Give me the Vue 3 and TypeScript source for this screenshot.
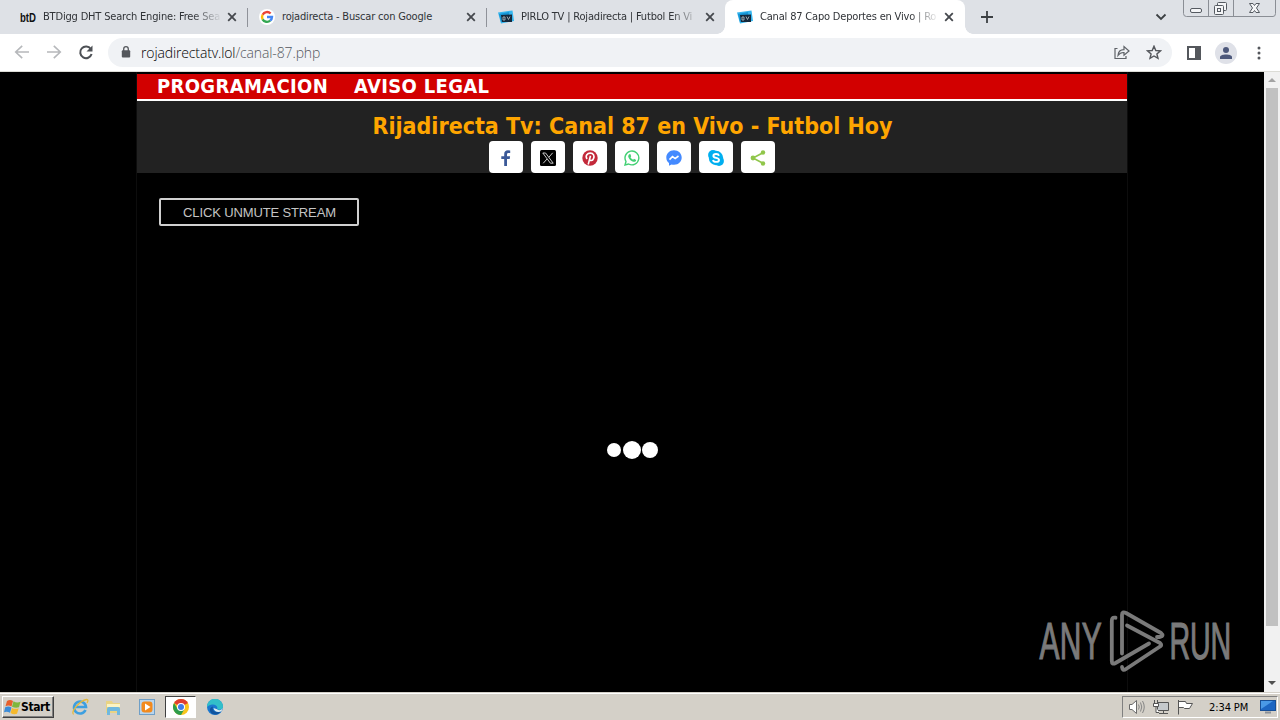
<script setup lang="ts">
interface Tab {
  title: string
  icon: 'bt' | 'google' | 'tv'
  cls: string
  active?: boolean
}

const tabs: Tab[] = [
  { title: 'BTDigg DHT Search Engine: Free Sea', icon: 'bt', cls: 't1' },
  { title: 'rojadirecta - Buscar con Google', icon: 'google', cls: 't2' },
  { title: 'PIRLO TV | Rojadirecta | Futbol En Vi', icon: 'tv', cls: 't3' },
  { title: 'Canal 87 Capo Deportes en Vivo | Ro', icon: 'tv', cls: 't4', active: true },
]

const shares = ['facebook', 'x', 'pinterest', 'whatsapp', 'messenger', 'skype', 'share']
</script>

<template>
  <div class="screen">
    <header class="tabstrip">
      <div v-for="tab in tabs" :key="tab.cls" class="tab" :class="[tab.cls, { active: tab.active }]">
        <span class="favicon">
          <svg v-if="tab.icon === 'bt'" width="16" height="16" viewBox="0 0 16 16">
            <text class="bt" x="0" y="12.500" textLength="16" lengthAdjust="spacingAndGlyphs">btD</text>
          </svg>
          <svg v-else-if="tab.icon === 'google'" width="16" height="16" viewBox="0 0 16 16">
            <circle cx="8" cy="8" r="8" fill="#fff" />
            <g fill="none" stroke-width="2.4">
              <path d="M11.6 4.5A5 5 0 0 0 3.6 5.7" stroke="#ea4335" />
              <path d="M3.6 5.7A5 5 0 0 0 3.6 10.4" stroke="#fbbc05" />
              <path d="M3.6 10.3A5 5 0 0 0 11.2 11.7" stroke="#34a853" />
              <path d="M8 8H13A5 5 0 0 1 11.2 11.7" stroke="#4285f4" />
            </g>
          </svg>
          <svg v-else width="16" height="16" viewBox="0 0 16 16">
            <path d="M0 3.5 14.5 1.5 16 12 3 14.5Z" fill="#35b5ee" />
            <path d="M1 5 11 3l1 8-9 2z" fill="#1695d5" />
            <path d="M3 6 14 5.5V13H4Z" fill="#14283c" />
            <path d="M5 8h2v3H5zM9 7.5l1.5 3 1.5-3" fill="none" stroke="#aab4b8" stroke-width=".9" />
          </svg>
        </span>
        <span class="title">{{ tab.title }}</span>
        <svg class="close" width="10" height="10" viewBox="0 0 10 10">
          <path d="M1.2 1.2 8.8 8.8M8.8 1.2 1.2 8.8" stroke="#45484d" stroke-width="1.8" />
        </svg>
      </div>
      <svg class="plus" width="12" height="12" viewBox="0 0 12 12">
        <path d="M6 0V12M0 6H12" stroke="#3c4043" stroke-width="1.8" />
      </svg>
      <svg class="chevron" width="12" height="8" viewBox="0 0 12 8">
        <path d="M1.5 1.5 6 6 10.500 1.5" fill="none" stroke="#3c4043" stroke-width="1.8" />
      </svg>
      <svg class="winbtns" width="94" height="18" viewBox="0 0 94 18">
        <path d="M.5 0V13.500Q.5 16.500 3.500 16.500H90Q92.500 16.500 92.500 13.500V0M25.500 0V16.500M50.500 0V16.500" fill="none" stroke="#8a8e95" />
        <g fill="#f4f5f7" stroke="#555a61" stroke-width="1">
          <rect x="7.500" y="8.500" width="11" height="4" rx="1.5" />
          <rect x="34.500" y="2.500" width="9" height="8" rx="1" />
          <rect x="31.500" y="5.500" width="9" height="9" rx="1" />
          <rect x="34.500" y="8.500" width="3" height="3" />
          <path d="M66.500 3.500H70L71.500 5.500 73 3.500H76.500L73.500 8 76.500 12.500H73L71.500 10.500 70 12.500H66.500L69.500 8Z" />
        </g>
      </svg>
    </header>

    <div class="toolbar">
      <svg class="nav" width="96" height="16" viewBox="0 0 96 16">
        <g fill="none" stroke="#b6b8bb" stroke-width="1.6">
          <path d="M16 7H3M9.200 .8 2.700 7 9.200 13.200" />
          <path d="M34 7H47M40.800 .8 47.300 7 40.800 13.200" />
        </g>
        <path d="M77.800 4A5.800 5.800 0 1 0 78.600 9" fill="none" stroke="#4d5055" stroke-width="2" />
        <path d="M79.500 .5V6.500H73.500Z" fill="#4d5055" />
      </svg>
      <div class="omnibox">
        <svg class="lock" width="10" height="13" viewBox="0 0 10 13">
          <rect x=".8" y="4.200" width="8.400" height="7.300" rx="1" fill="#54575c" />
          <path d="M2.700 5V3a2.300 2.300 0 0 1 4.600 0V5" fill="none" stroke="#54575c" stroke-width="1.300" />
        </svg>
        <span class="url"><b>rojadirectatv.lol</b>/canal-87.php</span>
        <svg class="share-page" width="16" height="15" viewBox="0 0 16 15" fill="none" stroke="#5f6368" stroke-width="1.200">
          <path d="M3.500 3.500H1V13.500H12V11" />
          <path d="M4 10.500C4.300 6.800 6.500 4.700 10 4.700V1.500L15 6 10 10.200V7.500C7.500 7.300 5.500 8.400 4 10.500Z" />
        </svg>
        <svg class="star" width="16" height="16" viewBox="0 0 16 16">
          <path d="M8 1.200 9.800 5.500 14.400 5.900 10.900 8.900 12 13.400 8 11 4 13.400 5.100 8.900 1.600 5.900 6.200 5.500Z" fill="none" stroke="#54575c" stroke-width="1.400" />
        </svg>
      </div>
      <svg class="panel" width="14" height="14" viewBox="0 0 14 14">
        <rect x="1" y="1" width="12" height="12" fill="none" stroke="#54575c" stroke-width="2" />
        <rect x="8" y="1" width="5" height="12" fill="#54575c" />
      </svg>
      <svg class="avatar" width="22" height="22" viewBox="0 0 22 22">
        <circle cx="11" cy="11" r="11" fill="#dfe1e8" />
        <circle cx="11" cy="8" r="3" fill="#4d587b" />
        <path d="M5 17V15C5 11.500 17 11.500 17 15V17Z" fill="#4d587b" />
      </svg>
      <svg class="dots" width="4" height="14" viewBox="0 0 4 14" fill="#54575c">
        <circle cx="2" cy="2" r="1.500" /><circle cx="2" cy="7" r="1.500" /><circle cx="2" cy="12" r="1.500" />
      </svg>
    </div>

    <main class="viewport">
      <div class="page">
        <nav class="menu"><a class="m1">PROGRAMACION</a><a class="m2">AVISO LEGAL</a></nav>
        <section class="banner">
          <h1><span>Rijadirecta Tv: Canal 87 en Vivo - Futbol Hoy</span></h1>
          <div class="shares">
            <span v-for="s in shares" :key="s" class="share">
              <svg width="16" height="16" viewBox="0 0 16 16">
                <path v-if="s === 'facebook'" d="M6.200 16V9H3.300V6.300H6.200V4.200C6.200 1.400 7.700.3 10 .3L12.200.5V2.900H10.700C9.300 2.900 9 3.600 9 4.600V6.300H12.100L11.700 9H9V16Z" fill="#3b5998" />
                <g v-else-if="s === 'x'">
                  <rect width="16" height="16" rx="1.500" fill="#000" />
                  <path d="M2.800 3H5.600L13.200 13.200H10.400ZM12.700 2.800 8.900 7.200M7 9 3.200 13.300" fill="none" stroke="#ddd" stroke-width=".9" />
                </g>
                <g v-else-if="s === 'pinterest'">
                  <circle cx="8" cy="8" r="7.700" fill="#c3293a" />
                  <path d="M5 9C2.800 5.300 5.600 3.100 8.300 3.100 11.500 3.100 12.700 5.900 11.500 8.600 10.500 11 8.200 10.800 7.500 9.600M8.500 5.700 6.200 14.500" fill="none" stroke="#fff" stroke-width="1.600" />
                </g>
                <g v-else-if="s === 'whatsapp'">
                  <path d="M1 15 2 11.500A6.900 6.900 0 1 1 4.600 14Z" fill="none" stroke="#43d074" stroke-width="1.400" />
                  <path d="M5.300 4.200 6.300 4 7.200 6.200 6.500 7.200C7.100 8.400 7.900 9.200 9.200 9.700L10 8.800 12.200 9.900C12 11.600 10.600 12.200 9.200 11.700 6.900 11 5 9.200 4.300 7 4 5.900 4.500 4.800 5.300 4.200Z" fill="#43d074" />
                </g>
                <g v-else-if="s === 'messenger'">
                  <path d="M8 .2C3.500.2.300 3.500.300 7.500.300 9.900 1.300 11.800 3 13.100V15.800L5.500 14.400C11.500 15.900 15.700 12.200 15.700 7.500 15.700 3.300 12.500.2 8 .2Z" fill="#448aff" />
                  <path d="M3.500 9.600 6.500 6.500 9.200 8.600 12.500 6" fill="none" stroke="#fff" stroke-width="1.600" />
                </g>
                <g v-else-if="s === 'skype'">
                  <circle cx="5" cy="5" r="4.900" fill="#00aff0" /><circle cx="11" cy="11" r="4.900" fill="#00aff0" /><circle cx="8" cy="8" r="7.200" fill="#00aff0" />
                  <path d="M11 5.700C10.300 3.400 5.400 3.500 5.400 5.900 5.400 8.500 11 7.300 11 10 11 12.500 5.600 12.600 5 10" fill="none" stroke="#fff" stroke-width="1.900" />
                </g>
                <g v-else fill="#90c64a">
                  <path d="M13 2.800 3 8 13 13.200" fill="none" stroke="#90c64a" stroke-width="1.600" />
                  <circle cx="13" cy="2.500" r="2.200" /><circle cx="3" cy="8" r="2.400" /><circle cx="13" cy="13.500" r="2.200" />
                </g>
              </svg>
            </span>
          </div>
        </section>
        <section class="player">
          <button class="unmute"><span>CLICK UNMUTE STREAM</span></button>
          <div class="loader"><i class="d1" /><i class="d2" /><i class="d3" /></div>
        </section>
      </div>
      <div class="scrollbar">
        <svg width="8" height="4" viewBox="0 0 8 4"><path d="M0 4 4 0 8 4Z" fill="#a3a3a3" /></svg>
        <div class="thumb" />
        <svg class="down" width="8" height="4" viewBox="0 0 8 4"><path d="M0 0 4 4 8 0Z" fill="#505050" /></svg>
      </div>
      <svg class="watermark" width="200" height="64" viewBox="0 0 200 64">
        <g fill="#7a7a7a" stroke="#7a7a7a" stroke-width="1.200" font-family="'Liberation Sans', Arial, sans-serif" font-size="52">
          <text x="0" y="0" transform="translate(3.500 50) scale(.575 1)" textLength="108">ANY</text>
          <text x="0" y="0" transform="translate(133.500 50) scale(.55 1)" textLength="112">RUN</text>
        </g>
        <g fill="none" stroke="#7a7a7a" stroke-width="3.800" stroke-linejoin="round" stroke-linecap="round">
          <path d="M79.500 8.700C76.500 8 75.800 10 75.800 12V52Q75.800 56 79.500 54L113 34.500" />
          <path d="M86 44.500V6Q86 2 90 4L125 24Q128.500 27 124 28L121 28" />
          <path d="M91 16.500 124 34Q126.500 36 124 37.500L90 60Q86.500 62.500 86 58" />
        </g>
      </svg>
    </main>

    <footer class="taskbar">
      <div class="start">
        <svg width="17" height="16" viewBox="0 0 17 16">
          <path d="M3 2Q6 0 9 2L7.500 7.500Q4.500 5.500 1.500 7.300Z" fill="#e8602c" />
          <path d="M9.500 2.300Q13 4.500 16.500 2.800L15 8.300Q11.500 9.500 8 7.700Z" fill="#7fb73c" />
          <path d="M1.200 8.300Q4.500 6.500 7.500 8.500L6 13.800Q3 12 0 13.200Z" fill="#3c8cd8" />
          <path d="M8 8.900Q11.200 10.500 14.700 9.200L13 14.800Q9.700 16 6.500 14Z" fill="#f5b92d" />
        </svg>
        <b>Start</b>
      </div>
      <svg class="ie" width="18" height="18" viewBox="0 0 18 18">
        <path d="M14.500 12A6 6 0 1 1 15 9H5" fill="none" stroke="#3d9fe0" stroke-width="2.600" />
        <path d="M2.500 16.500C-1 14 9 2.500 15.500 1.500 18 1.500 16.500 4 16 5" fill="none" stroke="#e5b93a" stroke-width="1.300" />
      </svg>
      <svg class="folder" width="17" height="17" viewBox="0 0 17 17">
        <path d="M1 2H7L8 4H15V14H1Z" fill="#e9d384" />
        <path d="M2 5H15V8H2Z" fill="#fbf3c3" />
        <path d="M2 16V10Q2 8 4 8H13Q15 8 15 10V16H12V12H5V16Z" fill="#70b8de" />
      </svg>
      <svg class="media" width="16" height="16" viewBox="0 0 16 16">
        <rect x=".5" y=".5" width="15" height="15" fill="#b9d5ed" stroke="#6f9fc7" />
        <rect x="2.500" y="2.500" width="11" height="11" rx="3" fill="#f28a1e" />
        <path d="M6 4.500 11.500 8 6 11.500Z" fill="#fff" />
      </svg>
      <div class="task-active">
        <svg width="16" height="16" viewBox="0 0 16 16">
          <circle cx="8" cy="8" r="8" fill="#f9c51c" />
          <path d="M8 8 1.070 4A8 8 0 0 1 14.930 4Z" fill="#df3e30" />
          <path d="M1.070 4A8 8 0 0 0 8 16L11.500 10H4.600Z" fill="#2e9d4c" />
          <circle cx="8" cy="8" r="4" fill="#fff" /><circle cx="8" cy="8" r="3" fill="#3f7de8" />
        </svg>
      </div>
      <svg class="edge" width="16" height="16" viewBox="0 0 16 16">
        <circle cx="8" cy="8" r="8" fill="#1b78cf" />
        <path d="M0 8A8 8 0 0 1 16 7.500C16 10.500 12.500 11.500 10 10.300 11.500 7 8 5 5 5.500 2 6 .5 7.500 0 8Z" fill="#32bfc9" />
        <path d="M6 7.500C4.500 11.500 8.500 14.700 14 12.200 11 17 4.500 16.500 3 12 2.500 9.500 4 7.800 6 7.500Z" fill="#11549f" />
        <path d="M10 10.300C12 12 15 11 16 8.500L14.500 12.300C11 14 7 12.500 6.500 9Z" fill="#e1edf0" />
      </svg>
      <div class="tray">
        <svg class="tray-icons" width="70" height="16" viewBox="0 0 70 16" fill="#fff" stroke="#6a6a6a">
          <path d="M1.500 5.500H4L8.500 1.500V14.500L4 10.500H1.500Z" />
          <path d="M10.500 5.500Q12 8 10.500 10.500M12.500 3.500Q15 8 12.500 12.500M14.500 2Q18 8 14.500 14" fill="none" stroke="#858585" />
          <path d="M29.500 3.500H40.500V11.500H29.500Z" fill="#c5c9cc" stroke="#555" />
          <path d="M31 14.500H40M35.500 12V14M26.500 1V4M29.500 1V4M25.500 4.500H30.500V7.500H25.500ZM28 8V13.500H31" stroke="#555" />
          <path d="M50.500 1V15.500M50.500 2.500H57.500L58.500 4.500H64.500L61.500 9.500H56.500L55.500 8.500H50.500" stroke="#555" />
        </svg>
        <span class="clock">2:34 PM</span>
        <svg class="desk" width="16" height="14" viewBox="0 0 16 14">
          <rect x=".5" y=".5" width="15" height="10" fill="#1d66c2" stroke="#184f96" />
          <path d="M1 1H13L1 9Z" fill="#4a99e6" /><path d="M5 12.500H11" stroke="#8a9098" stroke-width="2" />
        </svg>
      </div>
    </footer>
  </div>
</template>

<style>
body { margin: 0; overflow: hidden; }
</style>

<style scoped>
.screen {
  width: 1280px; height: 720px; display: flex; flex-direction: column; overflow: hidden;
  background: #000; font-family: 'DejaVu Sans Condensed', 'DejaVu Sans', sans-serif; font-stretch: condensed;
}
svg { display: block; flex: none; }
.tabstrip { height: 34px; flex: none; display: flex; align-items: center; background: #dee1e6; padding-left: 8px; }
.tab { width: 239px; height: 34px; box-sizing: border-box; display: flex; align-items: center; padding-left: 12px; position: relative; flex: none; }
.tab.t1::after, .tab.t2::after { content: ''; position: absolute; right: -1px; top: 8px; width: 1px; height: 19px; background: #8f9299; }
.tab.active { background: #fff; border-radius: 8px 8px 0 0; width: 240px; }
.tab.active::before, .tab.active::after { content: ''; position: absolute; bottom: 0; width: 8px; height: 8px; }
.tab.active::before { left: -8px; background: radial-gradient(circle at 0 0, transparent 7.500px, #fff 8px); }
.tab.active::after { right: -8px; background: radial-gradient(circle at 100% 0, transparent 7.500px, #fff 8px); }
.favicon { width: 16px; height: 16px; flex: none; }
.favicon svg { overflow: visible; }
.bt { font: bold 13px 'Liberation Sans', sans-serif; fill: #111; }
.title { width: 178px; flex: none; margin-left: 7px; box-sizing: border-box; white-space: nowrap; font-size: 11px; line-height: 16px; letter-spacing: -.18px; color: #303337; }
.t1 .title, .t3 .title, .t4 .title { mask-image: linear-gradient(90deg, #000 150px, transparent 179px); }
.close { margin-left: 6px; }
.plus { margin-left: 16px; }
.chevron { margin-left: 162px; }
.winbtns { margin-left: 16px; align-self: flex-start; }
.toolbar { height: 38px; box-sizing: border-box; flex: none; display: flex; align-items: center; background: #fff; border-bottom: 1px solid #dcdcd6; }
.nav { margin-left: 13px; }
.omnibox { width: 1064px; height: 29px; box-sizing: border-box; margin-left: -1px; border-radius: 15px; background: #f0f2f5; display: flex; align-items: center; padding: 0 10px 0 13px; }
.url { margin-left: 10px; font: 300 14px/18px 'Open Sans', 'DejaVu Sans Condensed', sans-serif; letter-spacing: -.13px; color: #55585d; flex: 1; white-space: nowrap; }
.url b { font-weight: inherit; color: #000; }
.star { margin-left: 16px; }
.panel { margin-left: 15px; }
.avatar { margin-left: 14px; }
.dots { margin-left: 20px; }
.viewport { height: 620px; flex: none; display: flex; justify-content: space-between; position: relative; background: #000; }
.page { width: 990px; margin-left: 136px; border: solid #0d0d0d; border-width: 0 1px; padding-top: 2px; }
.menu { height: 25px; display: flex; gap: 26px; padding-left: 20px; background: #d20000; border-bottom: 2px solid #fff; font-weight: bold; font-size: 20px; line-height: 25px; letter-spacing: .34px; color: #fff; white-space: nowrap; }
.banner { height: 72px; background: #222; display: flex; flex-direction: column; align-items: center; }
h1 { margin: 0; height: 40px; padding: 10px 0 0 1px; box-sizing: border-box; font-size: 23px; line-height: 30px; color: #ffa500; white-space: nowrap; }
.shares { display: flex; gap: 8px; }
.share { width: 34px; height: 32px; display: grid; place-items: center; padding-top: 1px; box-sizing: border-box; background: #fff; border-radius: 4px; }
.player { height: 519px; display: flex; flex-direction: column; padding-top: 25px; box-sizing: border-box; }
.unmute { width: 200px; height: 28px; margin-left: 22px; padding: 1px 0 0 1px; background: #000; border: 2px solid #d0d0d0; border-radius: 2px; color: #c4c4c4; font: 13px/20px 'Liberation Sans', Arial, sans-serif; letter-spacing: -.13px; }
.loader { display: flex; justify-content: center; align-items: center; margin-top: 215px; height: 18px; }
.loader i { border-radius: 50%; background: #fff; width: 14px; height: 14px; }
.loader .d2 { width: 18px; height: 18px; margin: 0 1px 0 2px; }
.loader .d3 { width: 16px; height: 16px; }
.scrollbar { width: 16px; background: #f1f1f1; display: flex; flex-direction: column; align-items: center; padding: 6px 0 7px; box-sizing: border-box; }
.thumb { width: 12px; height: 538px; margin-top: 6px; background: #c1c1c1; }
.down { margin-top: auto; }
.watermark { position: absolute; left: 1036px; top: 537px; }
.taskbar { height: 28px; box-sizing: border-box; flex: none; display: flex; align-items: center; background: #d4d0c8; padding-top: 2px; box-shadow: inset 0 1px #d4d0c8, inset 0 2px #fff; }
.start { width: 52px; height: 22px; box-sizing: border-box; margin-left: 2px; display: flex; align-items: center; gap: 0; padding-left: 1px; border: 1px solid; border-color: #fff #404040 #404040 #fff; box-shadow: inset -1px -1px #808080; color: #000; }
.start b { font-size: 12px; letter-spacing: -.4px; }
.ie { margin-left: 17px; }
.folder { margin-left: 16px; }
.media { margin-left: 17px; }
.task-active { width: 31px; height: 22px; box-sizing: border-box; margin-left: 10px; background: #fff; border: 1px solid; border-color: #404040 #fff #fff #404040; display: grid; place-items: center; }
.edge { margin-left: 11px; }
.tray { margin-left: auto; width: 156px; height: 22px; margin-right: 2px; box-sizing: border-box; border: 1px solid; border-color: #808080 #fff #fff #808080; display: flex; align-items: center; padding-left: 5px; }
.clock { margin-left: 11px; font-size: 11px; letter-spacing: -.1px; white-space: nowrap; color: #000; width: 42px; }
.desk { margin-left: 9px; }
</style>
